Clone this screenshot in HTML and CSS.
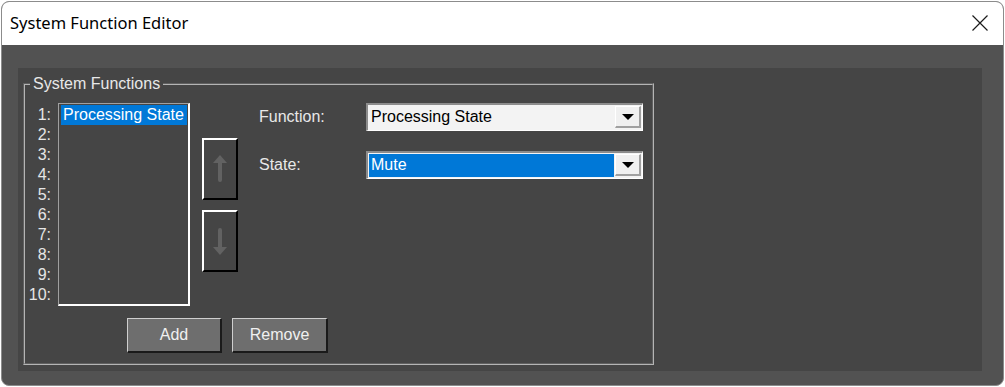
FILE: index.html
```html
<!DOCTYPE html>
<html lang="en">

<head>
  <meta charset="UTF-8">
  <meta name="viewport" content="width=device-width, initial-scale=1">
  <title>System Function Editor</title>
  <link rel="stylesheet" href="styles.css">
</head>

<body>

  <div class="window">
    <div class="titlebar">
      <span class="title">System Function Editor</span>
      <svg class="close" width="16" height="16" viewBox="0 0 16 16">
        <path d="M0.5 0.5 L15.5 15.5 M15.5 0.5 L0.5 15.5" stroke="#1b1b1b" stroke-width="1.2" fill="none" />
      </svg>
    </div>

    <div class="client">
      <div class="panel">
        <fieldset class="group">
          <legend>System Functions</legend>

          <div class="top-row">
            <ol class="slots">
              <li>1:</li>
              <li>2:</li>
              <li>3:</li>
              <li>4:</li>
              <li>5:</li>
              <li>6:</li>
              <li>7:</li>
              <li>8:</li>
              <li>9:</li>
              <li>10:</li>
            </ol>

            <div class="listbox">
              <div class="list-item selected">Processing State</div>
            </div>

            <div class="move-buttons">
              <button class="move" title="Move up">
                <svg width="16" height="28" viewBox="0 0 16 28">
                  <path d="M8 0 L15 8 L10 8 L10 25 Q10 27 8 27 Q6 27 6 25 L6 8 L1 8 Z" fill="#626262" />
                </svg>
              </button>
              <button class="move" title="Move down">
                <svg width="16" height="28" viewBox="0 0 16 28">
                  <path d="M8 28 L15 20 L10 20 L10 3 Q10 1 8 1 Q6 1 6 3 L6 20 L1 20 Z" fill="#626262" />
                </svg>
              </button>
            </div>

            <div class="fields">
              <div class="field">
                <label>Function:</label>
                <div class="combo">
                  <span class="combo-value">Processing State</span>
                  <span class="combo-arrow"></span>
                </div>
              </div>
              <div class="field">
                <label>State:</label>
                <div class="combo">
                  <span class="combo-value highlighted">Mute</span>
                  <span class="combo-arrow"></span>
                </div>
              </div>
            </div>
          </div>

          <div class="actions">
            <button class="action">Add</button>
            <button class="action remove">Remove</button>
          </div>
        </fieldset>
      </div>
    </div>
  </div>

</body>

</html>
```

FILE: styles.css
```css
body {
  margin: 0;
  background: #ffffff;
  font-family: 'Liberation Sans', Arial, sans-serif;
}

.window {
  box-sizing: border-box;
  width: 1003px;
  height: 385px;
  margin: 1px 0 0 1px;
  border: 1px solid #8c8c8c;
  border-radius: 8px;
  overflow: hidden;
  display: flex;
  flex-direction: column;
  background-color: #525252;
}

/* Title bar */
.titlebar {
  height: 43px;
  background-color: #ffffff;
  display: flex;
  align-items: center;
  justify-content: space-between;
  padding: 0 15px 0 8px;
  flex-shrink: 0;
}

.titlebar .title {
  font-family: 'Noto Sans', 'Open Sans', sans-serif;
  font-size: 16.5px;
  color: #000;
  margin-top: -2px;
}

.titlebar .close {
  margin-top: -1px;
}

.client {
  flex: 1;
  padding: 23px 21px 14px 16px;
}

.panel {
  height: 100%;
  background-color: #454545;
  padding: 7px 0 0 5px;
  box-sizing: border-box;
}

/* Group box */
.group {
  box-sizing: border-box;
  width: 631px;
  height: 290px;
  margin: 0;
  padding: 0;
  border: 2px groove #b4b4b4;
  border-radius: 0;
}

.group legend {
  font-size: 16px;
  line-height: 17px;
  color: #e8e8e8;
  padding: 0 3px;
  margin-left: 5px;
}

.top-row {
  display: flex;
  align-items: flex-start;
  margin-top: 11px;
}

.slots {
  list-style: none;
  margin: 2px 0 0 0;
  padding: 0;
  width: 26px;
  text-align: right;
  font-size: 16px;
  line-height: 20px;
  color: #e6e6e6;
}

.listbox {
  box-sizing: border-box;
  width: 132px;
  height: 203px;
  margin-left: 7px;
  border-style: solid;
  border-width: 1px 2px 2px 1px;
  border-color: #a0a0a0 #ffffff #ffffff #a0a0a0;
  padding: 1px 1px 0 2px;
}

.list-item {
  height: 20px;
  line-height: 20px;
  font-size: 16px;
  color: #fff;
  padding-left: 2px;
}

.list-item.selected {
  background-color: #0078d7;
}

/* Up / down buttons */
.move-buttons {
  display: flex;
  flex-direction: column;
  gap: 10px;
  margin: 35px 0 0 12px;
}

.move {
  box-sizing: border-box;
  width: 36px;
  height: 62px;
  padding: 0;
  background-color: #454545;
  border-style: solid;
  border-width: 2px 2px 2px 2px;
  border-color: #ffffff #000000 #000000 #ffffff;
  display: flex;
  align-items: center;
  justify-content: center;
}

/* Function / State fields */
.fields {
  display: flex;
  flex-direction: column;
  gap: 20px;
  margin-left: 21px;
}

.field {
  display: flex;
  align-items: center;
}

.field label {
  width: 107px;
  font-size: 16px;
  color: #e8e8e8;
}

.combo {
  box-sizing: border-box;
  width: 277px;
  height: 28px;
  border-style: solid;
  border-width: 2px 1px 1px 2px;
  border-color: #8c8c8c #ffffff #ffffff #8c8c8c;
  background-color: #f3f3f3;
  display: flex;
  padding: 1px 1px 1px 1px;
}

.combo-value {
  flex: 1;
  font-size: 16px;
  line-height: 22px;
  color: #000;
  padding-left: 2px;
}

.combo-value.highlighted {
  background-color: #0078d7;
  color: #fff;
}

.combo-arrow {
  box-sizing: border-box;
  width: 26px;
  height: 22px;
  margin-left: 1px;
  background-color: #f0f0f0;
  border-style: solid;
  border-width: 1px 2px 2px 1px;
  border-color: #ffffff #a0a0a0 #a0a0a0 #ffffff;
  display: flex;
  align-items: center;
  justify-content: center;
}

.combo-arrow::after {
  content: "";
  border-left: 6px solid transparent;
  border-right: 6px solid transparent;
  border-top: 6px solid #000;
  margin-top: 1px;
}

/* Add / Remove */
.actions {
  display: flex;
  gap: 10px;
  margin: 12px 0 0 102px;
}

.action {
  box-sizing: border-box;
  width: 95px;
  height: 35px;
  background-color: #6e6e6e;
  color: #f0f0f0;
  font-family: 'Liberation Sans', Arial, sans-serif;
  font-size: 16px;
  border-style: solid;
  border-width: 1px 2px 2px 1px;
  border-color: #cfcfcf #1a1a1a #1a1a1a #cfcfcf;
  padding: 0;
}

.action.remove {
  width: 96px;
}
```
